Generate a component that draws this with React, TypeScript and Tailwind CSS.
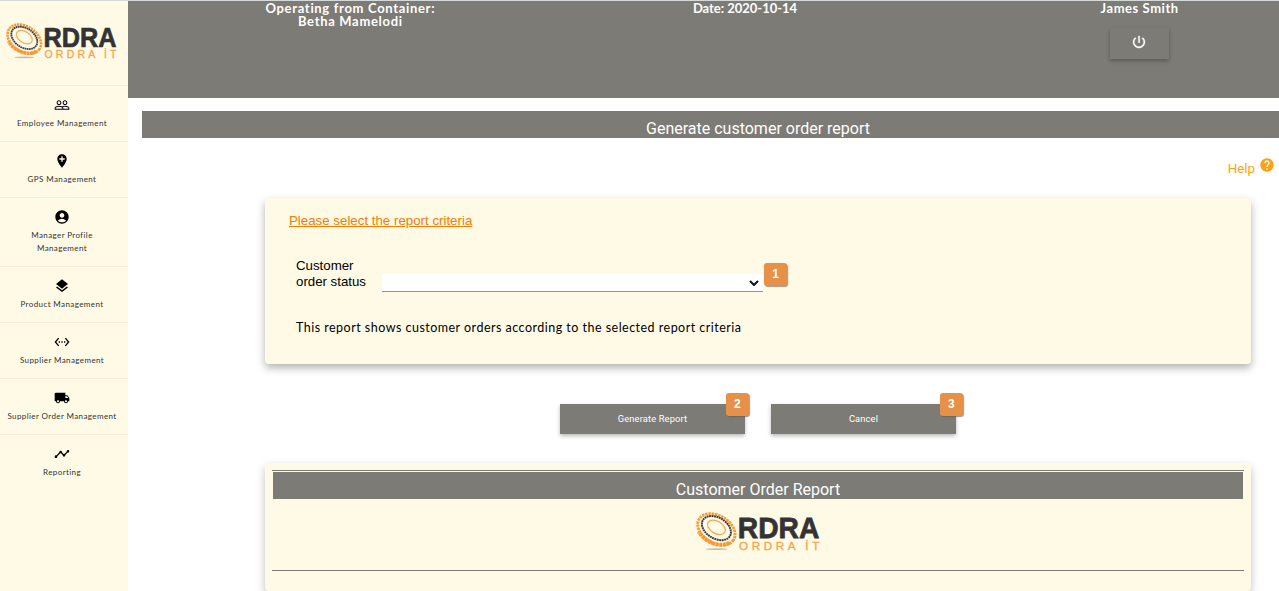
import type { ReactNode } from "react";
import type { IconType } from "react-icons";
import {
  MdAccountCircle,
  MdAddLocation,
  MdHelp,
  MdLayers,
  MdLocalShipping,
  MdPeopleOutline,
  MdSettingsEthernet,
  MdTimeline,
} from "react-icons/md";

function Logo({ className }: { className: string }) {
  return (
    <svg viewBox="0 0 112 37" className={`overflow-visible ${className}`} preserveAspectRatio="none">
      <ellipse cx="18.5" cy="34.4" rx="10" ry="0.8" fill="#c4c0b0" />
      <g fill="none" transform="translate(-0.6 -0.8) rotate(33 18.5 16.5)">
        <ellipse cx="19" cy="16.6" rx="18.2" ry="12.6" stroke="#f79a35" strokeWidth="2.6" strokeDasharray="2.2 0.7" />
        <path d="M35.5 20.5A18.2 12.6 0 0 1 7 27" stroke="#f79a35" strokeWidth="3.6" strokeDasharray="2.8 0.6" />
        <ellipse cx="18.4" cy="15.6" rx="14.2" ry="9.6" stroke="#3a3a3a" strokeWidth="1.8" strokeDasharray="1.7 0.5" />
        <ellipse cx="18" cy="15" rx="8.8" ry="5.6" stroke="#f9a84f" strokeWidth="1.2" />
      </g>
      <text x="37.5" y="24" fontFamily="Liberation Sans, sans-serif" fontWeight="700" fontSize="28" fill="#333333" stroke="#333333" strokeWidth="0.7" textLength="73" lengthAdjust="spacingAndGlyphs">
        RDRA
      </text>
      <text x="38.5" y="34.8" fontFamily="Liberation Sans, sans-serif" fontSize="10.5" fill="#f9a548" stroke="#f9a548" strokeWidth="0.3" textLength="72" lengthAdjust="spacing">
        ORDRA İT
      </text>
    </svg>
  );
}

const menu: { icon: IconType; label: ReactNode; tall?: boolean }[] = [
  { icon: MdPeopleOutline, label: "Employee Management" },
  { icon: MdAddLocation, label: "GPS Management" },
  {
    icon: MdAccountCircle,
    label: (
      <>
        Manager Profile
        <br />
        Management
      </>
    ),
    tall: true,
  },
  { icon: MdLayers, label: "Product Management" },
  { icon: MdSettingsEthernet, label: "Supplier Management" },
  { icon: MdLocalShipping, label: "Supplier Order Management" },
  { icon: MdTimeline, label: "Reporting" },
];

function Badge({ n, className }: { n: number; className: string }) {
  return (
    <span
      className={`absolute flex h-[23px] w-[23px] items-center justify-center rounded-[3px] bg-[#e69048] pb-px font-['Liberation_Sans',sans-serif] text-[12px] font-bold text-white shadow-[1px_1px_1px_rgba(90,90,90,0.6)] ${className}`}
    >
      {n}
    </span>
  );
}

function ActionButton({ label, n, badge }: { label: string; n: number; badge: string }) {
  return (
    <button className="relative h-[30px] w-[185px] bg-[#7d7b76] font-[Roboto,sans-serif] text-[9.3px] tracking-[0.15px] text-white shadow-[0_2px_4px_rgba(0,0,0,0.28)]">
      {label}
      <Badge n={n} className={badge} />
    </button>
  );
}

export default function App() {
  return (
    <div className="flex h-[591px] w-full flex-col overflow-hidden bg-white text-black">
      <div className="h-px shrink-0 bg-[#d5d9da]" />
      <div className="flex min-h-0 flex-1">
        <nav className="w-32 shrink-0 bg-[#fffae6]">
          <div className="h-[84px] pt-[22px] pl-[6px]">
            <Logo className="h-[37px] w-[112px]" />
          </div>
          {menu.map(({ icon: Icon, label, tall }, i) => (
            <div
              key={i}
              className={`flex flex-col items-center border-t border-[#f5ecd9] pt-[11px] pr-1 ${tall ? "h-[69px]" : "h-14"}`}
            >
              <Icon className="size-4 shrink-0" />
              <span className="mt-[4px] text-center font-[Lato,sans-serif] text-[8px] leading-[13px] tracking-[0.4px] whitespace-nowrap text-[#333]">
                {label}
              </span>
            </div>
          ))}
        </nav>

        <main className="min-w-0 flex-1 overflow-hidden">
          <header className="h-[97px] bg-[#7d7b76] pl-[25px] font-[Lato,sans-serif] text-[13px] leading-[13px] font-bold text-white">
            <div className="grid w-[1184px] grid-cols-3 pt-px text-center">
              <div>
                <span className="tracking-[0.68px]">Operating from Container:</span>
                <br />
                <span className="tracking-[0.68px]">Betha Mamelodi</span>
              </div>
              <div className="tracking-[-0.02px]">Date: 2020-10-14</div>
              <div className="flex flex-col items-center tracking-[0.56px]">
                James Smith
                <button className="mt-[13px] flex h-[31px] w-[59px] items-center justify-center bg-[#7d7b76] shadow-[0_2px_4px_rgba(0,0,0,0.28)]">
                  <svg viewBox="0 0 24 24" className="mr-px size-4 -translate-y-[2px]" fill="currentColor" stroke="currentColor" strokeWidth="0.5">
                    <path d="M13 3h-2v10h2V3zm4.83 2.17l-1.42 1.42C17.99 7.86 19 9.81 19 12c0 3.87-3.13 7-7 7s-7-3.13-7-7c0-2.19 1.01-4.14 2.58-5.42L6.17 5.17C4.23 6.82 3 9.26 3 12c0 4.97 4.03 9 9 9s9-4.03 9-9c0-2.74-1.23-5.18-3.17-6.83z" />
                  </svg>
                </button>
              </div>
            </div>
          </header>

          <h1 className="mt-[13px] ml-[14px] h-[27px] w-[1232px] bg-[#7d7b76] pt-[6px] text-center font-[Roboto,sans-serif] text-[16px] leading-6 text-white">
            Generate customer order report
          </h1>

          <div className="flex h-[60px] items-start justify-end gap-1 pt-5 pr-1 text-[#ffa113]">
            <span className="pt-[3px] font-[Roboto,sans-serif] text-[13.3px] leading-4">Help</span>
            <MdHelp className="size-4 -translate-y-[1px]" />
          </div>

          <section className="ml-[137px] h-[166px] w-[986px] rounded-[4px] bg-[#fffae6] pt-[15px] pl-6 font-['Liberation_Sans',sans-serif] text-[13.3px] shadow-[0_4px_8px_rgba(0,0,0,0.3)]">
            <div className="leading-4 text-[#ff7800] underline">Please select the report criteria</div>
            <div className="mt-[29px] flex h-[34px] pl-[7px]">
              <label className="w-[86px] leading-4 tracking-[-0.02px]">
                Customer
                <br />
                order status
              </label>
              <div className="relative mt-[16px] flex h-[18px] w-[381px] items-end justify-end border-b border-[#ff7800] bg-white pr-1 pb-[5px]">
                <svg viewBox="0 0 10 6" className="h-[6px] w-[10px]">
                  <path d="M1 1l4 4 4-4" fill="none" stroke="#111" strokeWidth="2" />
                </svg>
                <Badge n={1} className="-top-[11px] left-[382px]" />
              </div>
            </div>
            <p className="mt-[28px] pl-[7px] font-[Lato,sans-serif] text-[12.5px] leading-4 tracking-[0.48px] whitespace-nowrap">
              This report shows customer orders according to the selected report criteria
            </p>
          </section>

          <div className="mt-10 ml-[432px] flex gap-[26px]">
            <ActionButton label="Generate Report" n={2} badge="-top-[11px] left-[166px]" />
            <ActionButton label="Cancel" n={3} badge="-top-[11px] left-[169px]" />
          </div>

          <section className="mt-[29px] ml-[137px] h-[128px] w-[986px] rounded-[4px] bg-[#fffae6] px-[7px] pt-[7px] shadow-[0_4px_8px_rgba(0,0,0,0.25)]">
            <div className="flex h-[101px] flex-col items-center border-y border-[#7d7b76] pt-px">
              <h2 className="h-[27px] w-[970px] bg-[#7d7b76] pt-[6px] text-center font-[Roboto,sans-serif] text-[16px] leading-6 text-white">
                Customer Order Report
              </h2>
              <Logo className="mt-[13px] h-[40px] w-[125px]" />
            </div>
          </section>
        </main>
      </div>
    </div>
  );
}
